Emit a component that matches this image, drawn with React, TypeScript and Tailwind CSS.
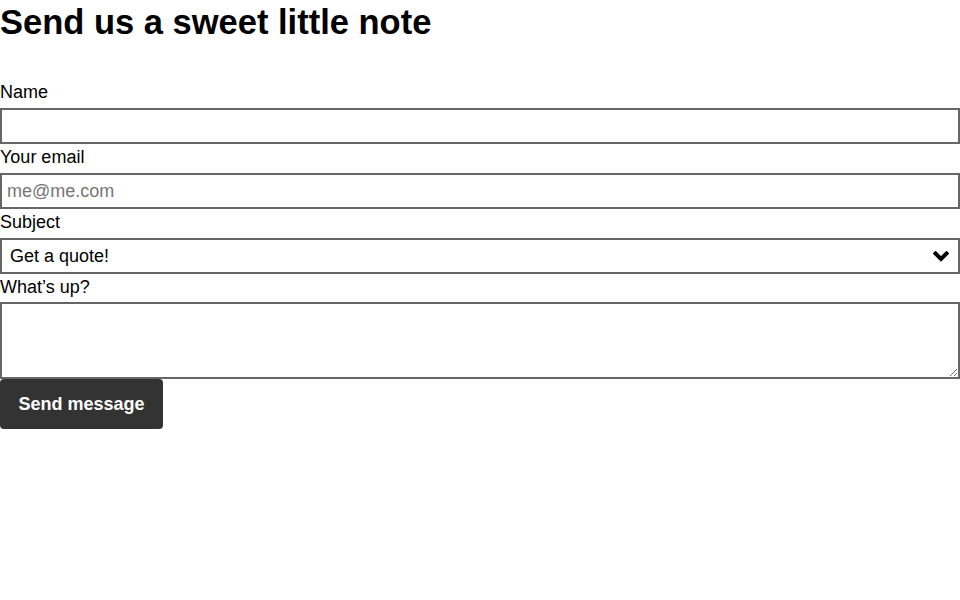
import React from 'react';

const font = { fontFamily: '"Liberation Sans", Arial, sans-serif' };

const labelCls = 'block text-[18px] leading-[20px] pt-[3px]';

export default function App() {
    return (
        <div className="min-h-screen bg-white text-black" style={font}>
            <h1 className="text-[34.5px] font-bold leading-[40px] pt-[2px] m-0">Send us a sweet little note</h1>

            <form className="mt-[37px] flex flex-col" onSubmit={(e) => e.preventDefault()}>
                <label htmlFor="name" className={`${labelCls} mb-[6px]`}>Name</label>
                <input
                    id="name"
                    type="text"
                    className="block w-full h-[36px] border-2 border-[#666] px-[5px] text-[18px] outline-none"
                />

                <label htmlFor="email" className={`${labelCls} mb-[6px]`}>Your email</label>
                <input
                    id="email"
                    type="email"
                    placeholder="me@me.com"
                    className="block w-full h-[36px] border-2 border-[#666] px-[5px] text-[18px] outline-none placeholder:text-[#757575]"
                />

                <label htmlFor="subject" className={`${labelCls} mb-[6px]`}>Subject</label>
                <div className="relative">
                    <select
                        id="subject"
                        className="block w-full h-[36px] border-2 border-[#666] pl-[8px] text-[18px] appearance-none bg-white outline-none rounded-none"
                        defaultValue="quote"
                    >
                        <option value="quote">Get a quote!</option>
                        <option value="hello">Just saying hi</option>
                    </select>
                    {/* chevron */}
                    <svg
                        className="absolute right-[11px] top-[13px] pointer-events-none"
                        width="16"
                        height="11"
                        viewBox="0 0 16 11"
                    >
                        <polyline points="2.5,2.5 8,8 13.5,2.5" fill="none" stroke="#000" strokeWidth="4" strokeLinecap="square" />
                    </svg>
                </div>

                <label htmlFor="msg" className={`${labelCls} mb-[5px]`}>What’s up?</label>
                <textarea
                    id="msg"
                    className="block w-full h-[77px] border-2 border-[#666] px-[5px] text-[18px] outline-none"
                />

                <div>
                    <button
                        type="submit"
                        className="w-[163px] h-[50px] bg-[#333] text-white text-[18px] font-bold rounded-[4px]"
                    >
                        Send message
                    </button>
                </div>
            </form>
        </div>
    );
}
